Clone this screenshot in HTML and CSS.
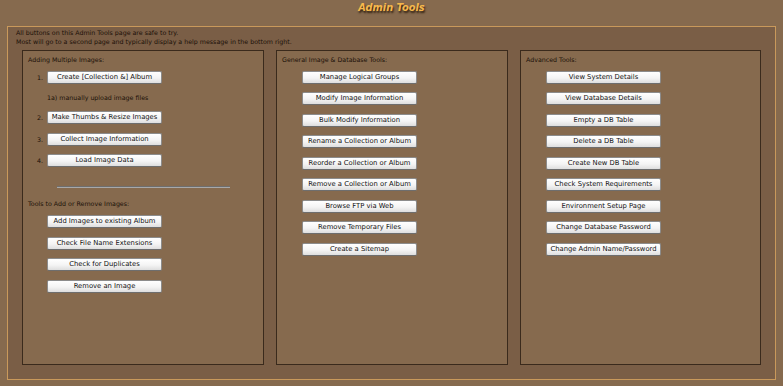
FILE: index.html
```html
<!DOCTYPE html>
<html>
<head>
<meta charset="utf-8">
<title>Admin Tools</title>
<link rel="stylesheet" href="styles.css">
</head>
<body>
<header class="page-title">Admin Tools</header>
<main class="frame">
  <div class="intro">
    <div>All buttons on this Admin Tools page are safe to try.</div>
    <div>Most will go to a second page and typically display a help message in the bottom right.</div>
  </div>
  <div class="panels">
    <section class="panel panel-left">
      <div class="panel-title">Adding Multiple Images:</div>
      <div class="row"><span class="num">1.</span><button class="btn">Create [Collection &amp;] Album</button></div>
      <div class="row row-note"><span class="num"></span><span class="note">1a) manually upload image files</span></div>
      <div class="row"><span class="num">2.</span><button class="btn">Make Thumbs &amp; Resize Images</button></div>
      <div class="row"><span class="num">3.</span><button class="btn">Collect Image Information</button></div>
      <div class="row"><span class="num">4.</span><button class="btn">Load Image Data</button></div>
      <hr class="divider">
      <div class="panel-title sub">Tools to Add or Remove Images:</div>
      <div class="row"><span class="num"></span><button class="btn">Add Images to existing Album</button></div>
      <div class="row"><span class="num"></span><button class="btn">Check File Name Extensions</button></div>
      <div class="row"><span class="num"></span><button class="btn">Check for Duplicates</button></div>
      <div class="row"><span class="num"></span><button class="btn">Remove an Image</button></div>
    </section>
    <section class="panel panel-mid">
      <div class="panel-title">General Image &amp; Database Tools:</div>
      <div class="row"><button class="btn">Manage Logical Groups</button></div>
      <div class="row"><button class="btn">Modify Image Information</button></div>
      <div class="row"><button class="btn">Bulk Modify Information</button></div>
      <div class="row"><button class="btn">Rename a Collection or Album</button></div>
      <div class="row"><button class="btn">Reorder a Collection or Album</button></div>
      <div class="row"><button class="btn">Remove a Collection or Album</button></div>
      <div class="row"><button class="btn">Browse FTP via Web</button></div>
      <div class="row"><button class="btn">Remove Temporary Files</button></div>
      <div class="row"><button class="btn">Create a Sitemap</button></div>
    </section>
    <section class="panel panel-right">
      <div class="panel-title">Advanced Tools:</div>
      <div class="row"><button class="btn">View System Details</button></div>
      <div class="row"><button class="btn">View Database Details</button></div>
      <div class="row"><button class="btn">Empty a DB Table</button></div>
      <div class="row"><button class="btn">Delete a DB Table</button></div>
      <div class="row"><button class="btn">Create New DB Table</button></div>
      <div class="row"><button class="btn">Check System Requirements</button></div>
      <div class="row"><button class="btn">Environment Setup Page</button></div>
      <div class="row"><button class="btn">Change Database Password</button></div>
      <div class="row"><button class="btn">Change Admin Name/Password</button></div>
    </section>
  </div>
</main>
</body>
</html>
```
FILE: styles.css
```css
html, body {
  margin: 0;
  padding: 0;
  background: #866a4e;
  font-family: "DejaVu Sans", Verdana, sans-serif;
  color: #1e140a;
}

.page-title {
  height: 26px;
  box-sizing: border-box;
  padding-top: 1px;
  text-align: center;
  font-family: "DejaVu Sans", Verdana, sans-serif;
  font-weight: bold;
  font-style: italic;
  font-size: 9.8px;
  line-height: 14px;
  color: #f6b84c;
  text-shadow: 1px 2px 2px #2c1c0c;
}

.frame {
  margin: 0 7px;
  height: 354px;
  box-sizing: border-box;
  border: 1px solid #c9995b;
  background: #7a5e46;
  padding: 0 14px 14px 14px;
  display: flex;
  flex-direction: column;
}

.intro {
  font-size: 6.3px;
  line-height: 9px;
  margin-left: -6px;
  margin-top: 1px;
  color: #1a1008;
}

.panels {
  margin-top: 4px;
  flex: 1;
  display: grid;
  grid-template-columns: 242px 232px 1fr;
  column-gap: 12px;
}

.panel {
  border: 1px solid #3a2a1c;
  background: #866a4e;
  padding: 3px 5px 0 5px;
  display: flex;
  flex-direction: column;
}

.panel-title {
  font-size: 6.3px;
  line-height: 11px;
  height: 11px;
  margin-bottom: 1.5px;
  color: #1a1008;
}

.panel-title.sub {
  margin-top: 10px;
  margin-bottom: 2px;
}

.row {
  height: 21.5px;
  display: flex;
  align-items: center;
}

.row-note {
  height: 19px;
}

.panel-mid .row,
.panel-right .row {
  padding-left: 20px;
}

.num {
  width: 15px;
  margin-right: 4px;
  text-align: right;
  font-size: 6.3px;
  color: #1a1008;
}

.note {
  font-size: 6.3px;
  color: #1a1008;
}

.btn {
  width: 115px;
  height: 13px;
  padding: 0;
  margin: 0;
  border: 1px solid #8c8c8c;
  border-bottom-color: #6e6e6e;
  border-radius: 2px;
  background: linear-gradient(#ffffff, #f4f4f4 55%, #dedede);
  font-family: "DejaVu Sans", Verdana, sans-serif;
  font-size: 6.8px;
  line-height: 11px;
  color: #111111;
  text-align: center;
  white-space: nowrap;
}

.divider {
  width: 173px;
  margin: 14.5px auto 0 auto;
  height: 0;
  border: 0;
  border-top: 1px solid #6e6e6e;
  border-bottom: 1px solid #a8a8a8;
}
```
